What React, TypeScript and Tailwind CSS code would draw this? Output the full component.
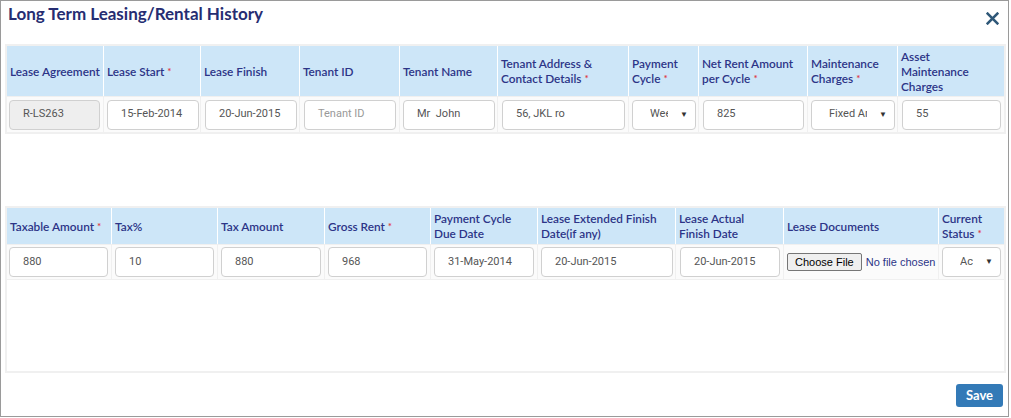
import React from "react";

const navy = "text-[#2c3487]";

function Req() {
  return <span className="text-[#e0383e] ml-[3px] text-[10px] align-top">*</span>;
}

type Col = { w: number; label: React.ReactNode; req?: boolean };

function Header({ cols, h }: { cols: Col[]; h: string }) {
  return (
    <div className={`flex ${h} bg-[#cde6f8]`}>
      {cols.map((c, i) => (
        <div
          key={i}
          style={{ width: c.w }}
          className={`flex items-center px-[3px] text-[11.8px] font-semibold leading-[15px] ${navy} ${i < cols.length - 1 ? "border-r border-white" : ""}`}
        >
          <div className="whitespace-nowrap">
            {c.label}
            {c.req && <Req />}
          </div>
        </div>
      ))}
    </div>
  );
}

function TextInput({ value, placeholder, disabled }: { value?: string; placeholder?: string; disabled?: boolean }) {
  return (
    <div
      className={`h-[30px] w-full rounded-[4px] border border-[#d0d0d0] flex items-center pl-[13px] text-[11px] overflow-hidden whitespace-pre ${disabled ? "bg-[#eeeeee] text-[#555]" : "bg-white text-[#555]"}`}
    >
      {value ? value : <span className="text-[#999]">{placeholder}</span>}
    </div>
  );
}

function SelectBox({ value }: { value: string }) {
  return (
    <div className="h-[30px] w-full rounded-[4px] border border-[#d0d0d0] bg-white flex items-center pl-[17px] pr-[7px] text-[11px] text-[#555] whitespace-nowrap">
      <span className="flex-1 min-w-0 overflow-hidden">{value}</span>
      <span className="text-[8px] text-[#333] ml-[12px]">▼</span>
    </div>
  );
}

function Cell({ w, children, last, pl = 2, pr = 3 }: { w: number; children: React.ReactNode; last?: boolean; pl?: number; pr?: number }) {
  return (
    <div
      style={{ width: w, paddingLeft: pl, paddingRight: pr }}
      className={`flex items-center ${last ? "" : "border-r border-[#f0f0f0]"}`}
    >
      {children}
    </div>
  );
}

export default function App() {
  const cols1: Col[] = [
    { w: 97, label: "Lease Agreement" },
    { w: 97, label: "Lease Start", req: true },
    { w: 99, label: "Lease Finish" },
    { w: 100, label: "Tenant ID" },
    { w: 98, label: "Tenant Name" },
    { w: 131, label: <>Tenant Address &amp;<br />Contact Details</>, req: true },
    { w: 70, label: <>Payment<br />Cycle</>, req: true },
    { w: 109, label: <>Net Rent Amount<br />per Cycle</>, req: true },
    { w: 90, label: <>Maintenance<br />Charges</>, req: true },
    { w: 106, label: <>Asset<br />Maintenance<br />Charges</> },
  ];
  const cols2: Col[] = [
    { w: 105, label: "Taxable Amount", req: true },
    { w: 106, label: "Tax%" },
    { w: 107, label: "Tax Amount" },
    { w: 106, label: "Gross Rent", req: true },
    { w: 107, label: <>Payment Cycle<br />Due Date</> },
    { w: 138, label: <>Lease Extended Finish<br />Date(if any)</> },
    { w: 108, label: <>Lease Actual<br />Finish Date</> },
    { w: 155, label: "Lease Documents" },
    { w: 65, label: <>Current<br />Status</>, req: true },
  ];

  return (
    <div className="w-[1009px] h-[417px] border border-[#9a9a9a] bg-white flex flex-col" style={{ fontFamily: "Lato, 'Open Sans', sans-serif" }}>
      <div className="h-[43px] flex items-start justify-between pl-[7px] pr-[7px] pt-[2px]">
        <div className="text-[17px] font-bold leading-[22px] text-[#262d72]">Long Term Leasing/Rental History</div>
        <svg width="13" height="13" viewBox="0 0 12 12" className="mt-[9px] mr-[2px]">
          <path d="M1.5 1.5 L10.5 10.5 M10.5 1.5 L1.5 10.5" stroke="#2f5878" strokeWidth="2.4" strokeLinecap="square" />
        </svg>
      </div>

      <div className="ml-[4px] w-[1001px] border-2 border-[#f0f0f0] bg-[#fbfbfb]">
        <Header cols={cols1} h="h-[50px]" />
        <div className="flex h-[36px] border-t border-[#f0f0f0]" style={{ fontFamily: "Roboto, 'Liberation Sans', sans-serif" }}>
          <Cell w={97}><TextInput value="R-LS263" disabled /></Cell>
          <Cell w={97} pl={3} pr={1}><TextInput value="15-Feb-2014" /></Cell>
          <Cell w={99} pl={4} pr={2}><TextInput value="20-Jun-2015" /></Cell>
          <Cell w={100} pl={4} pr={3}><TextInput placeholder="Tenant ID" /></Cell>
          <Cell w={98} pl={3} pr={2}><TextInput value="Mr  John" /></Cell>
          <Cell w={131} pl={4} pr={3}><TextInput value="56, JKL ro" /></Cell>
          <Cell w={70} pl={3} pr={2}><SelectBox value="Weekly" /></Cell>
          <Cell w={109} pl={4} pr={3}><TextInput value="825" /></Cell>
          <Cell w={90} pl={3} pr={2}><SelectBox value="Fixed Amount" /></Cell>
          <Cell w={106} pl={4} pr={3} last><TextInput value="55" /></Cell>
        </div>
      </div>

      <div className="mt-[72px] ml-[4px] w-[1001px] h-[167px] border-2 border-[#f0f0f0] bg-white">
        <Header cols={cols2} h="h-[36px]" />
        <div className="flex h-[36px] border-t border-b border-[#f0f0f0] bg-[#fbfbfb]" style={{ fontFamily: "Roboto, 'Liberation Sans', sans-serif" }}>
          <Cell w={105}><TextInput value="880" /></Cell>
          <Cell w={106} pl={3} pr={3}><TextInput value="10" /></Cell>
          <Cell w={107} pl={3} pr={3}><TextInput value="880" /></Cell>
          <Cell w={106} pl={3} pr={3}><TextInput value="968" /></Cell>
          <Cell w={107} pl={3} pr={3}><TextInput value="31-May-2014" /></Cell>
          <Cell w={138} pl={3} pr={2}><TextInput value="20-Jun-2015" /></Cell>
          <Cell w={108} pl={4} pr={3}><TextInput value="20-Jun-2015" /></Cell>
          <Cell w={155} pl={3} pr={2}>
            <div className="flex items-center whitespace-nowrap text-[11px]" style={{ fontFamily: "'Liberation Sans', Arial, sans-serif" }}>
              <div className="h-[18px] px-[7px] flex items-center border border-[#767676] rounded-[2px] bg-[#efefef] text-black">Choose File</div>
              <span className="ml-[4px] text-[#2c3487]">No file chosen</span>
            </div>
          </Cell>
          <Cell w={65} pl={3} pr={3} last><SelectBox value="Active" /></Cell>
        </div>
      </div>

      <div className="flex justify-end mt-[11px] pr-[5px]">
        <div className="w-[47px] h-[23px] rounded-[3px] bg-[#337ab7] text-white text-[13px] font-bold flex items-center justify-center">Save</div>
      </div>
    </div>
  );
}
